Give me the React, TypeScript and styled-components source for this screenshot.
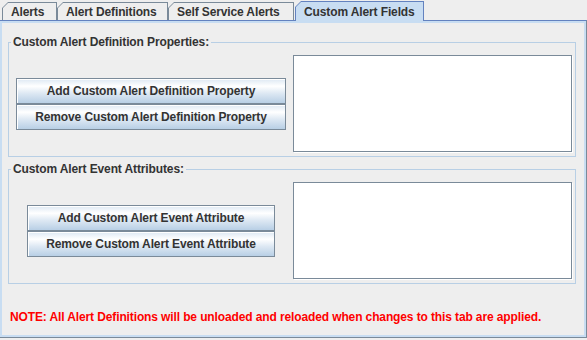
import React from "react";
import styled, { createGlobalStyle } from "styled-components";

const GlobalStyle = createGlobalStyle`
  html, body {
    margin: 0;
    padding: 0;
    background: #eeeeee;
  }
  body {
    font-family: "Liberation Sans", Arial, sans-serif;
    font-size: 12px;
    font-weight: bold;
    letter-spacing: -0.12px;
    color: #333333;
  }
`;

const tabs = [
  { label: "Alerts", w: 55 },
  { label: "Alert Definitions", w: 111 },
  { label: "Self Service Alerts", w: 126 },
  { label: "Custom Alert Fields", w: 129, active: true },
];

const App = () => {
  return (
    <Frame>
      <GlobalStyle />
      <TabRow>
        {tabs.map((t) => (
          <TabEdge key={t.label} $w={t.w} $active={t.active}>
            <TabFace $active={t.active}>{t.label}</TabFace>
          </TabEdge>
        ))}
      </TabRow>
      <Panel>
        <Group>
          <Legend>Custom Alert Definition Properties:</Legend>
          <GroupBody>
            <ButtonArea>
              <ButtonStack $w={270}>
                <SwingButton>Add Custom Alert Definition Property</SwingButton>
                <SwingButton>Remove Custom Alert Definition Property</SwingButton>
              </ButtonStack>
            </ButtonArea>
            <ListBox />
          </GroupBody>
        </Group>
        <Group $gap>
          <Legend>Custom Alert Event Attributes:</Legend>
          <GroupBody>
            <ButtonArea>
              <ButtonStack $w={248}>
                <SwingButton>Add Custom Alert Event Attribute</SwingButton>
                <SwingButton>Remove Custom Alert Event Attribute</SwingButton>
              </ButtonStack>
            </ButtonArea>
            <ListBox />
          </GroupBody>
        </Group>
        <Note>
          NOTE: All Alert Definitions will be unloaded and reloaded when changes to this tab are applied.
        </Note>
      </Panel>
    </Frame>
  );
};

export default App;

const Frame = styled.div`
  width: 587px;
  height: 340px;
  display: flex;
  flex-direction: column;
  background: #eeeeee;
`;

const TabRow = styled.div`
  display: flex;
  align-items: flex-end;
  height: 20px;
  padding-left: 2px;
`;

const TabEdge = styled.div<{ $w: number; $active?: boolean }>`
  position: relative;
  z-index: ${(p) => (p.$active ? 1 : 0)};
  width: ${(p) => p.$w}px;
  height: ${(p) => (p.$active ? 20 : 18)}px;
  margin-bottom: ${(p) => (p.$active ? -1 : 0)}px;
  margin-left: ${(p) => (p.$active ? 1 : 0)}px;
  padding: 1px 1px 0 1px;
  box-sizing: border-box;
  background: ${(p) => (p.$active ? "#6382bf" : "#7a8a99")};
  clip-path: polygon(0 6px, 6px 0, 100% 0, 100% 100%, 0 100%);
`;

const TabFace = styled.div<{ $active?: boolean }>`
  height: 100%;
  box-sizing: border-box;
  padding-left: 8px;
  display: flex;
  align-items: center;
  line-height: 14px;
  white-space: nowrap;
  background: ${(p) => (p.$active ? "#c8ddf2" : "#eeeeee")};
  clip-path: polygon(0 5px, 5px 0, 100% 0, 100% 100%, 0 100%);
`;

const Panel = styled.div`
  width: 587px;
  height: 318px;
  box-sizing: border-box;
  border-top: 1px solid #6382bf;
  border-right: 1px solid #7a8a99;
  border-bottom: 1px solid #7a8a99;
  box-shadow: inset 0 0 0 2px #c8ddf2;
  padding: 14px 10px 0 8px;
  display: flex;
  flex-direction: column;
`;

const Group = styled.fieldset<{ $gap?: boolean }>`
  margin: ${(p) => (p.$gap ? "5px" : "0")} 0 0 0;
  padding: 0;
  min-width: 0;
  border: 1px solid #b8cfe5;
`;

const Legend = styled.legend`
  margin-left: 2px;
  padding: 0 2px;
  line-height: 14px;
  white-space: nowrap;
`;

const GroupBody = styled.div`
  display: flex;
  padding: 6px 3px 4px 0;
`;

const ButtonArea = styled.div`
  flex: 1;
  display: flex;
  align-items: center;
  justify-content: center;
`;

const ButtonStack = styled.div<{ $w: number }>`
  width: ${(p) => p.$w}px;
  display: flex;
  flex-direction: column;
`;

const SwingButton = styled.button`
  height: 26px;
  padding: 0;
  margin: 0;
  border: 1px solid #7a8a99;
  box-shadow: inset 1px 1px 0 #ffffff;
  background: linear-gradient(#dde8f3 0%, #ffffff 30%, #dde8f3 60%, #b8cfe5 100%);
  font-family: inherit;
  font-size: 12px;
  font-weight: bold;
  letter-spacing: inherit;
  color: #333333;
  line-height: 14px;
  white-space: nowrap;
  cursor: pointer;
`;

const ListBox = styled.div`
  width: 279px;
  height: 97px;
  box-sizing: border-box;
  background: #ffffff;
  border: 1px solid #7a8a99;
  box-shadow: 1px 1px 0 #ffffff;
`;

const Note = styled.div`
  margin: 26px 0 0 2px;
  line-height: 14px;
  color: #ff0000;
  white-space: nowrap;
`;
